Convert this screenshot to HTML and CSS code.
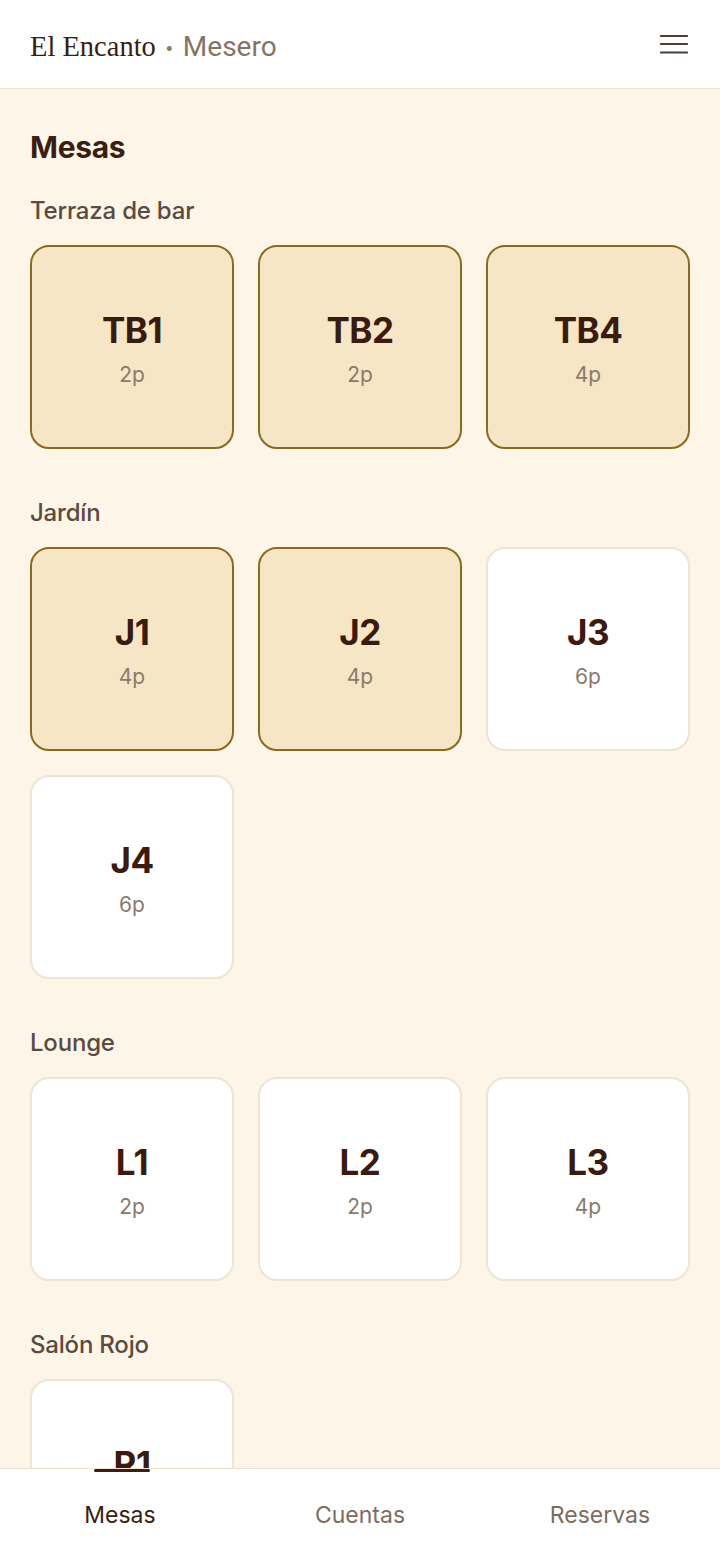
FILE: index.html
```html
<!DOCTYPE html>
<html>
<head>
    <title>El Encanto - Mesero</title>
    <link rel="stylesheet" href="styles.css">
</head>
<body>
    <header class="topbar">
        <div class="brand">
            <span class="brand-name">El Encanto</span>
            <span class="brand-dot">•</span>
            <span class="brand-role">Mesero</span>
        </div>
        <button class="menu-btn" aria-label="Menú">
            <svg width="28" height="20" viewBox="0 0 28 20">
                <path d="M1 2h26M1 10h26M1 18.5h26" stroke="#4b3e37" stroke-width="2.2" stroke-linecap="round"/>
            </svg>
        </button>
    </header>

    <main class="content">
        <h1 class="page-title">Mesas</h1>

        <section class="zone">
            <h2 class="zone-title">Terraza de bar</h2>
            <div class="table-grid">
                <div class="table busy"><span class="table-name">TB1</span><span class="table-seats">2p</span></div>
                <div class="table busy"><span class="table-name">TB2</span><span class="table-seats">2p</span></div>
                <div class="table busy"><span class="table-name">TB4</span><span class="table-seats">4p</span></div>
            </div>
        </section>

        <section class="zone">
            <h2 class="zone-title">Jardín</h2>
            <div class="table-grid">
                <div class="table busy"><span class="table-name">J1</span><span class="table-seats">4p</span></div>
                <div class="table busy"><span class="table-name">J2</span><span class="table-seats">4p</span></div>
                <div class="table"><span class="table-name">J3</span><span class="table-seats">6p</span></div>
                <div class="table"><span class="table-name">J4</span><span class="table-seats">6p</span></div>
            </div>
        </section>

        <section class="zone">
            <h2 class="zone-title">Lounge</h2>
            <div class="table-grid">
                <div class="table"><span class="table-name">L1</span><span class="table-seats">2p</span></div>
                <div class="table"><span class="table-name">L2</span><span class="table-seats">2p</span></div>
                <div class="table"><span class="table-name">L3</span><span class="table-seats">4p</span></div>
            </div>
        </section>

        <section class="zone">
            <h2 class="zone-title">Salón Rojo</h2>
            <div class="table-grid">
                <div class="table"><span class="table-name">R1</span><span class="table-seats">4p</span></div>
            </div>
        </section>
    </main>

    <nav class="tabbar">
        <a href="#" class="tab active">Mesas</a>
        <a href="#" class="tab">Cuentas</a>
        <a href="#" class="tab">Reservas</a>
    </nav>
</body>
</html>
```

FILE: styles.css
```css
body {
    margin: 0;
    padding: 0;
    background-color: #fdf5e8;
    font-family: Inter, "Noto Sans", sans-serif;
    color: #3b1d12;
}
.topbar {
    height: 88px;
    background: white;
    border-bottom: 1px solid #ece2d0;
    display: flex;
    align-items: center;
    justify-content: space-between;
    padding: 0 30px;
}
.brand {
    display: flex;
    align-items: baseline;
    gap: 9px;
    padding-top: 4px;
}
.brand-name {
    font-family: "Liberation Serif", "DejaVu Serif", serif;
    font-size: 28.5px;
    color: #3b1d12;
}
.brand-dot {
    font-size: 16px;
    color: #8c7c70;
    position: relative;
    top: -3px;
}
.brand-role {
    font-family: Roboto, "Liberation Sans", sans-serif;
    font-size: 28px;
    color: #857466;
}
.menu-btn {
    background: none;
    border: none;
    padding: 0;
    margin-right: 2px;
    display: flex;
    cursor: pointer;
}
.content {
    padding: 40px 30px 40px 30px;
}
.page-title {
    margin: 0 0 32px 0;
    font-size: 30px;
    line-height: 36px;
    font-weight: 700;
    letter-spacing: -0.3px;
}
.zone {
    margin-bottom: 50px;
}
.zone-title {
    margin: 0 0 20px 0;
    font-size: 24px;
    line-height: 28px;
    font-weight: 500;
    color: #5b4a3f;
    letter-spacing: -0.2px;
}
.table-grid {
    display: grid;
    grid-template-columns: repeat(3, 1fr);
    gap: 24px;
}
.table {
    box-sizing: border-box;
    height: 204px;
    background: white;
    border: 2px solid #eee4d2;
    border-radius: 19px;
    display: flex;
    flex-direction: column;
    align-items: center;
    justify-content: center;
    gap: 12px;
    padding-top: 4px;
}
.table.busy {
    background: #f6e6c5;
    border-color: #8a6a20;
}
.table-name {
    font-size: 35px;
    line-height: 40px;
    font-weight: 700;
    color: #3b1a10;
    letter-spacing: -0.5px;
}
.table-seats {
    font-size: 21px;
    line-height: 26px;
    color: #8a7a6d;
}
.tabbar {
    position: fixed;
    left: 0;
    right: 0;
    bottom: 0;
    height: 89px;
    background: white;
    border-top: 1px solid #ece2d0;
    display: grid;
    grid-template-columns: repeat(3, 1fr);
}
.tab {
    position: relative;
    display: flex;
    align-items: center;
    justify-content: center;
    text-decoration: none;
    font-size: 23px;
    color: #7d6c5f;
    padding-top: 3px;
}
.tab.active {
    color: #3b1d12;
}
.tab.active::before {
    content: "";
    position: absolute;
    top: 0;
    left: 50%;
    width: 56px;
    height: 3px;
    margin-left: -26px;
    background: #3b1d12;
    border-radius: 2px;
}
```
